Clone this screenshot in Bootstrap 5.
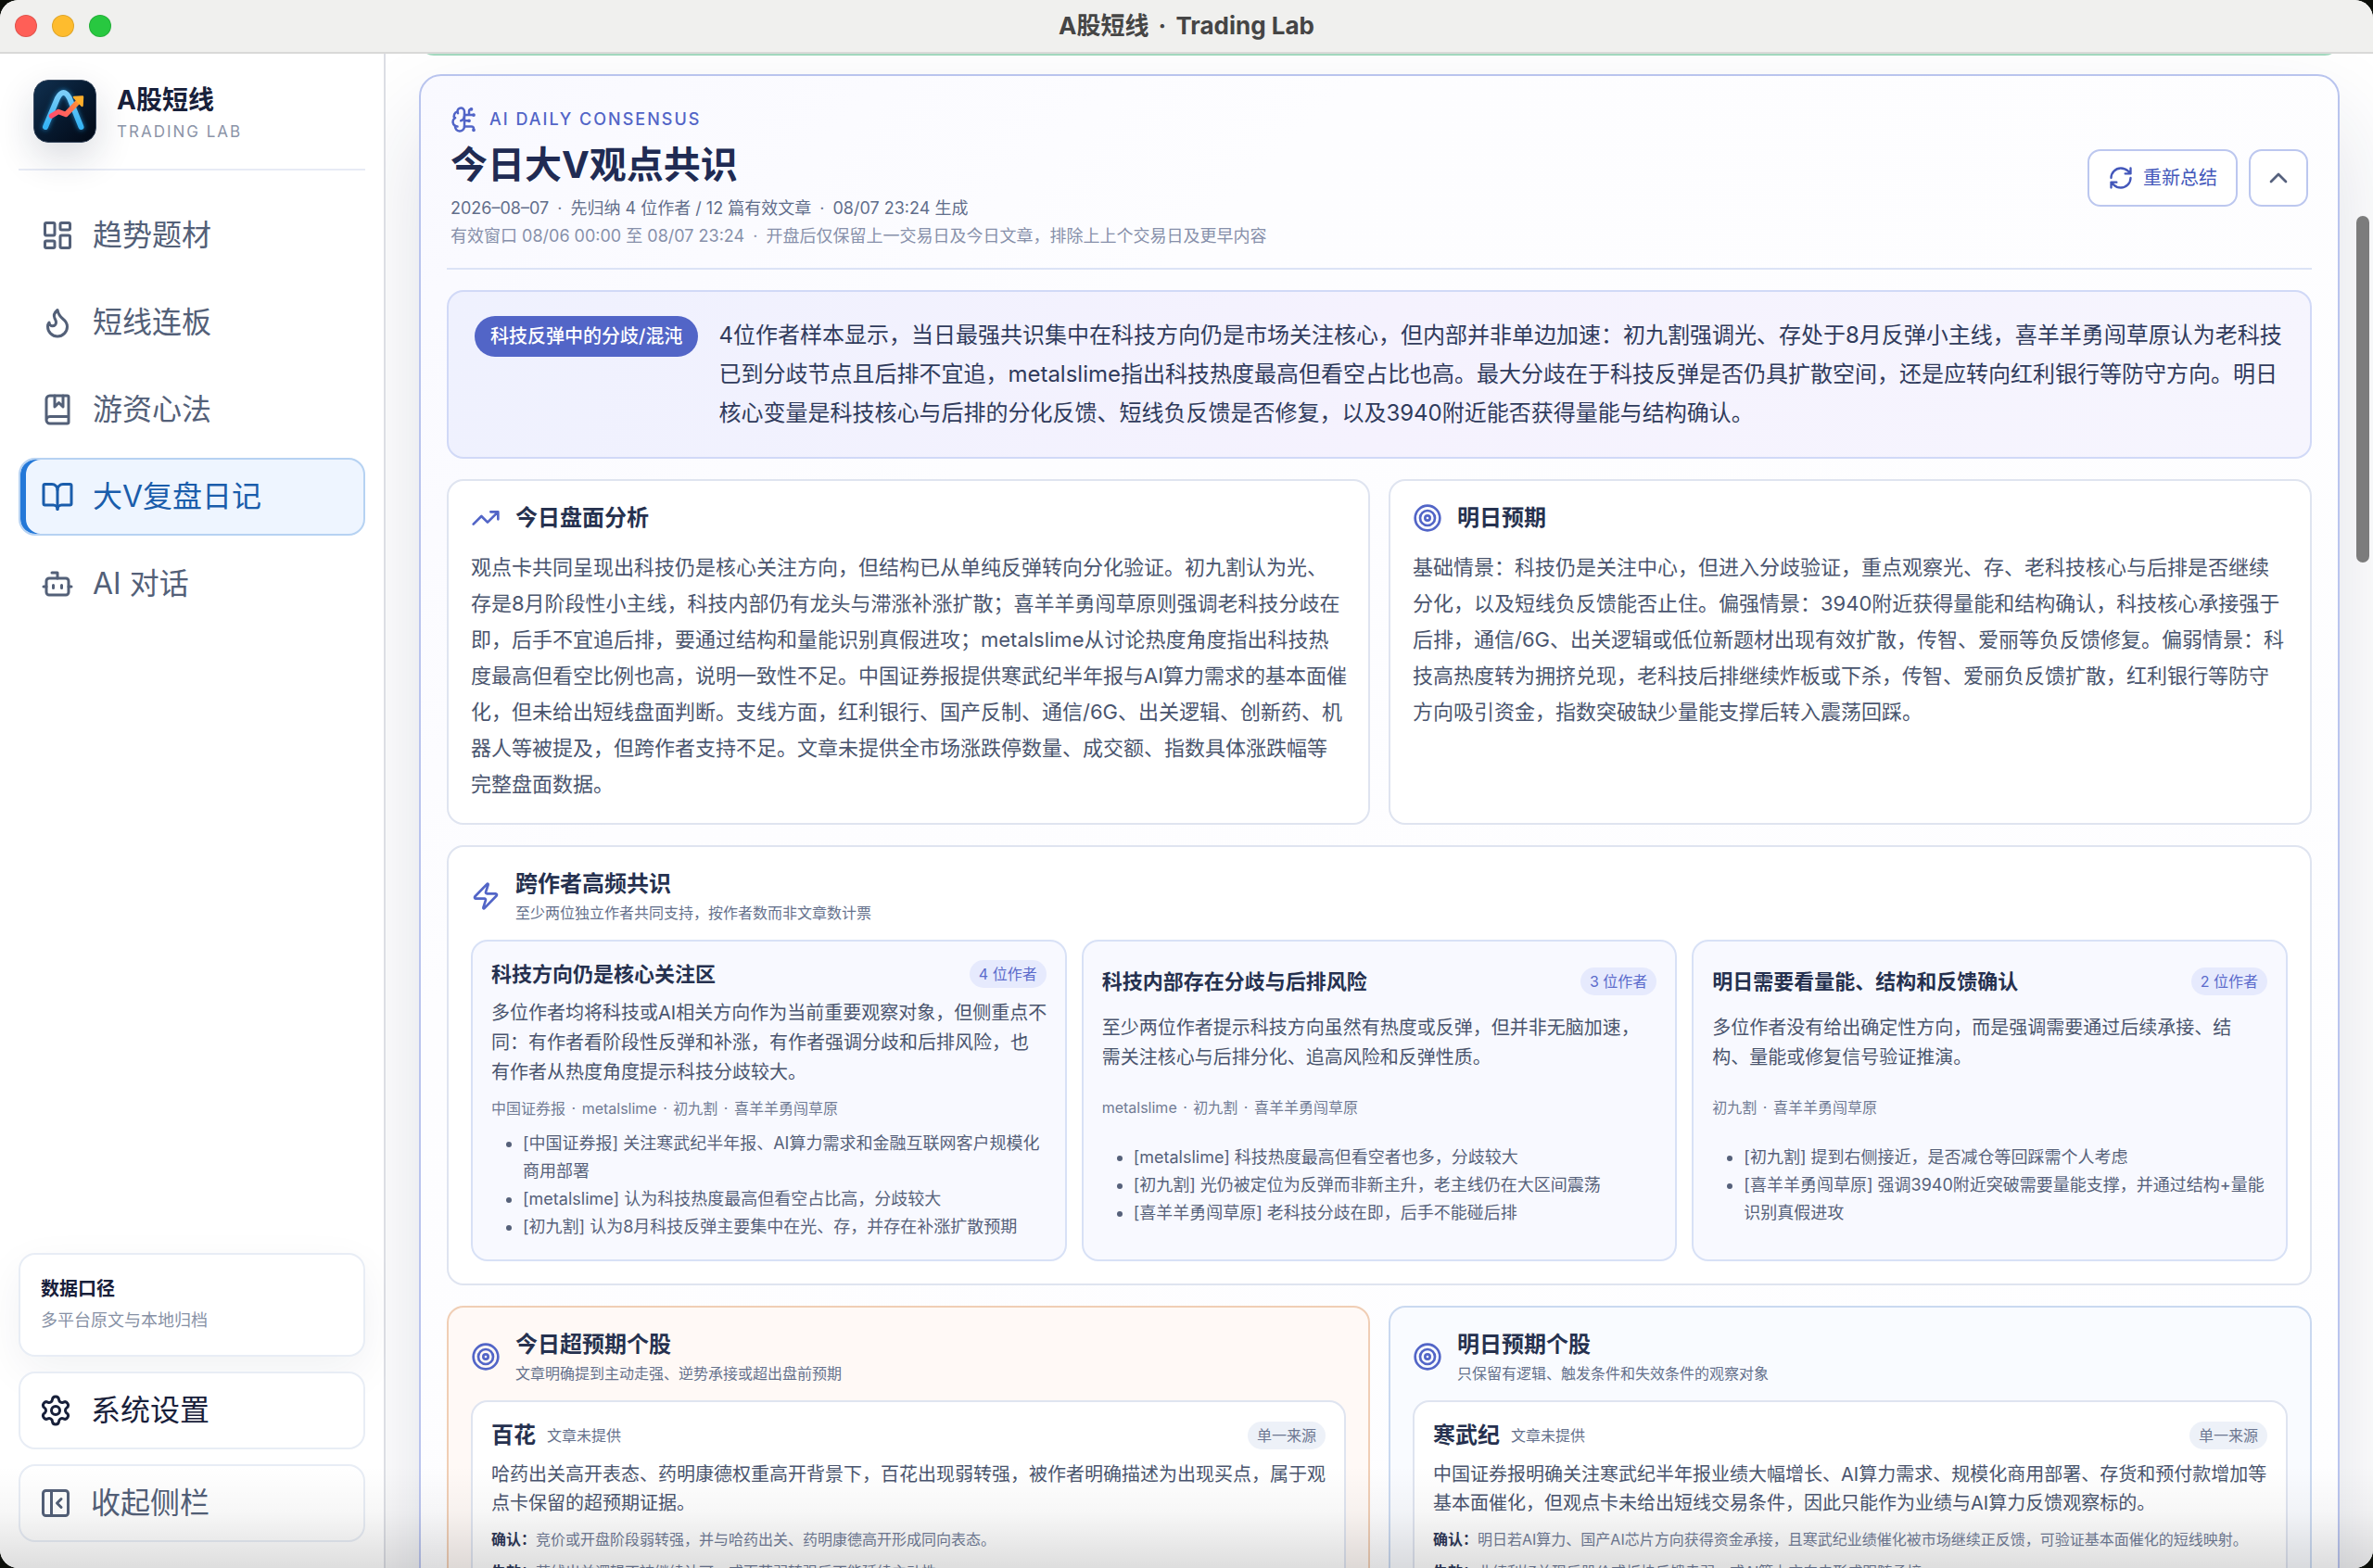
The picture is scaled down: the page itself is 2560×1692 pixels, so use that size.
<!DOCTYPE html>
<html lang="zh-CN">
<head>
<meta charset="utf-8">
<meta name="viewport" content="width=device-width, initial-scale=1">
<title>A股短线 · Trading Lab</title>
<link rel="stylesheet" href="https://cdn.jsdelivr.net/npm/bootstrap@5.3.0/dist/css/bootstrap.min.css">
<style>
  :root { --ink: #26314f; --body: #4a556e; --muted-ink: #65718c; --brand: #5265c7; --line: #dfe4f0; }
  body { font-family: Inter, "Noto Sans CJK SC", sans-serif; font-size: 20px; line-height: 32px; color: var(--body); background: #0c0f0a; }
  .app-window { height: 100vh; background: #fff; border-radius: 20px; }
  .ico { width: 32px; height: 32px; fill: none; stroke: currentColor; stroke-width: 2; stroke-linecap: round; stroke-linejoin: round; flex: none; }
  .sep { margin: 0 2px; }

  /* title bar */
  .titlebar { height: 58px; background: #f0f0ee; border-bottom: 2px solid #d9d9d8; padding: 0 16px; }
  .window-title { font-size: 26px; font-weight: 700; color: #454545; }
  .window-title .sep, .meta .sep { margin: 0 4px; }
  .light { width: 24px; height: 24px; border-radius: 50%; border: 1px solid rgba(0,0,0,.12); }
  .light-close { background: #ff5f57; } .light-min { background: #febc2e; } .light-max { background: #28c840; }
  .lights { width: 120px; gap: 16px; }

  /* sidebar */
  .sidebar { width: 416px; flex: none; border-right: 2px solid #dcdee4; padding: 28px 20px; background: #fff; }
  .brand-block { padding: 0 16px 28px; border-bottom: 2px solid #e7ebf5; gap: 22px; }
  .logo { width: 68px; height: 68px; border-radius: 16px; box-shadow: 0 16px 40px rgba(20,30,60,.16); flex: none; }
  .brand-name { font-size: 28px; line-height: 36px; font-weight: 700; color: #18203a; }
  .brand-sub { font-size: 17px; line-height: 24px; letter-spacing: 2px; color: #8b94a8; margin-top: 4px; }
  .side-nav { gap: 10px; margin-top: 28px; }
  .side-item { height: 84px; padding: 0 22px; gap: 20px; font-size: 32px; line-height: 40px; color: #536078; border: 2px solid transparent; border-radius: 18px; text-decoration: none; background: transparent; width: 100%; }
  .side-item .ico { width: 36px; height: 36px; }
  .side-item.active { background: #eef5ff; border-color: #b6d2f2; color: #1a5dab; box-shadow: inset 6px 0 0 #2478d8; }
  .side-foot { gap: 16px; }
  .side-foot .side-item { border-color: #e8edf5; background: #fff; padding: 0 20px; }
  .side-foot .side-dark { color: #18203a; }
  .source-box { border: 2px solid #e8edf5; border-radius: 18px; padding: 22px; background: #fff; box-shadow: 0 16px 48px rgba(20,30,60,.06); line-height: 30px; }
  .source-title { font-size: 20px; font-weight: 700; color: #18203a; }
  .source-note { font-size: 18px; color: #8791a5; margin-top: 4px; }

  /* main column */
  .main-pane { padding: 0 36px; background: #fff; min-width: 0; }
  .prev-panel { flex: none; height: 20px; margin-top: -18px; border: 2px solid #a3d9bf; border-top: 0; border-radius: 0 0 16px 16px; background: #fff; }
  .consensus { margin-top: 20px; padding: 28px; border: 2px solid #b9c4ee; border-radius: 24px; background: linear-gradient(135deg, #f9f9ff 0, #fdfdff 720px, #fefeff 100%); box-shadow: 0 48px 100px rgba(30,36,80,.14); flex: none; }
  .consensus-head { padding: 4px 4px 19px; border-bottom: 2px solid #dce3f6; }
  .eyebrow { font-size: 18px; line-height: 30px; letter-spacing: 2px; font-weight: 500; color: var(--brand); gap: 12px; }
  .eyebrow .ico { width: 30px; height: 30px; }
  .page-title { font-size: 40px; line-height: 56px; font-weight: 700; color: #202b53; margin: 6px 0 4px; }
  .meta { font-size: 18px; line-height: 30px; color: #626e8b; }
  .meta-light { color: #8790aa; }
  .head-tools { gap: 12px; }
  .tool-btn { height: 62px; border: 2px solid #bcc7ef; border-radius: 14px; background: #fff; color: #4357ba; font-size: 20px; padding: 0 20px; gap: 10px; }
  .tool-btn .ico { width: 28px; height: 28px; }
  .tool-square { width: 64px; padding: 0; color: #56617d; }
  .tool-square .ico { width: 32px; height: 32px; }
  .summary { margin-top: 22px; padding: 26px 28px; gap: 22px; border: 2px solid #d1d9f7; border-radius: 18px; background: linear-gradient(100deg, #eff1fe, #f5f2fe 50%, #f6f5fe); }
  .summary-tag { background: var(--brand); color: #fff; font-size: 20px; font-weight: 500; line-height: 44px; padding: 0 17px; border-radius: 22px; white-space: nowrap; }
  .summary p { font-size: 24px; line-height: 42px; color: #303b5c; }
  .stack { display: grid; gap: 22px 20px; margin-top: 22px; grid-template-columns: 1fr 1fr; }
  .panel { border: 2px solid var(--line); border-radius: 18px; background: #fff; padding: 24px; min-width: 0; }
  .panel-note { padding-bottom: 22px; }
  .panel-wide { grid-column: 1 / -1; }
  .panel-hot { background: #fff9f6; border-color: #f0ceb5; }
  .panel-next { background: #f9fbff; border-color: #cad9f0; }
  .panel-head { gap: 16px; margin-bottom: 18px; color: var(--brand); }
  .panel-head h2 { font-size: 24px; line-height: 32px; font-weight: 700; color: var(--ink); }
  .panel-head p { font-size: 16px; line-height: 22px; color: var(--muted-ink); margin-top: 4px; }
  .panel-text { font-size: 22px; line-height: 39px; margin: 0; }
  .topic-text { margin: 0 -1px 0 0; }
  .panel-text-long { margin-right: -4px; }
  .topics { display: grid; grid-template-columns: repeat(3, 1fr); gap: 16px; }
  .topic, .stock { display: grid; gap: 11px; padding: 20px; border: 2px solid #d8e1f6; border-radius: 18px; background: #f8f9ff; }
  .stock { border-color: #dfe4f0; background: #fff; }
  .topic h3 { font-size: 22px; line-height: 30px; font-weight: 700; color: var(--ink); }
  .stock h3 { font-size: 24px; line-height: 30px; font-weight: 700; color: var(--ink); }
  .stock-code { font-size: 16px; color: var(--muted-ink); }
  .count-pill { font-size: 16px; line-height: 30px; padding: 0 10px; border-radius: 15px; background: #e6eafd; color: #5b6bcb; white-space: nowrap; }
  .count-gray { background: #edf1f8; color: #6c7791; }
  .authors { font-size: 16px; line-height: 24px; color: #717c95; }
  .evidence { font-size: 18px; line-height: 30px; padding-left: 34px; color: #56617a; }
  .stock-text { line-height: 31px; }
  .cond { font-size: 16px; line-height: 24px; color: #727d98; }
  .cond strong { color: #2d3857; font-weight: 700; }
  .scroll-thumb { position: absolute; right: 4px; top: 175px; width: 14px; height: 374px; border-radius: 7px; background: #7c7c7c; }
  .bottom-shade { position: absolute; left: 0; right: 0; bottom: 0; height: 110px; pointer-events: none; background: linear-gradient(to bottom, rgba(0,0,0,0), rgba(0,0,0,.03) 45%, rgba(0,0,0,.13)); }
</style>
</head>
<body>
<svg class="d-none" aria-hidden="true">
  <symbol id="i-target" viewBox="0 0 24 24"><circle cx="12" cy="12" r="10"/><circle cx="12" cy="12" r="6"/><circle cx="12" cy="12" r="2"/></symbol>
</svg>
<div class="app-window d-flex flex-column overflow-hidden position-relative">
  <header class="titlebar d-flex align-items-center flex-shrink-0">
    <div class="lights d-flex"><span class="light light-close"></span><span class="light light-min"></span><span class="light light-max"></span></div>
    <div class="window-title flex-grow-1 text-center">A股短线 <span class="sep">·</span> Trading Lab</div>
    <div class="lights"></div>
  </header>
  <div class="d-flex flex-grow-1 overflow-hidden position-relative">
    <aside class="sidebar d-flex flex-column">
      <div class="brand-block d-flex align-items-center">
        <svg class="logo" viewBox="0 0 68 68" aria-hidden="true">
          <defs>
            <linearGradient id="lg-bg" x1="0" y1="0" x2="1" y2="1"><stop offset="0" stop-color="#10304f"/><stop offset=".5" stop-color="#071a30"/><stop offset="1" stop-color="#020814"/></linearGradient>
            <linearGradient id="lg-a" x1="0" y1="0" x2="0" y2="1"><stop offset="0" stop-color="#7ccdf8"/><stop offset="1" stop-color="#35b4f5"/></linearGradient>
            <linearGradient id="lg-r" gradientUnits="userSpaceOnUse" x1="18" y1="38" x2="54" y2="18"><stop offset="0" stop-color="#ff4d6d"/><stop offset=".5" stop-color="#ff6a55"/><stop offset="1" stop-color="#ffb01f"/></linearGradient>
            <filter id="lg-glow" x="-30%" y="-30%" width="160%" height="160%"><feGaussianBlur stdDeviation="2.5"/></filter>
          </defs>
          <rect x="0.5" y="0.5" width="67" height="67" rx="15.5" fill="url(#lg-bg)" stroke="#3a4a60"/>
          <path d="M13 51 26 20Q32.500 8 39 20L51.500 51" fill="none" stroke="#2aa4f0" stroke-opacity=".6" stroke-width="7" stroke-linecap="round" stroke-linejoin="round" filter="url(#lg-glow)"/>
          <path d="M13 51 26 20Q32.500 8 39 20L51.500 51" fill="none" stroke="url(#lg-a)" stroke-width="6" stroke-linecap="round" stroke-linejoin="round"/>
          <path d="M19.500 39 27 34.500 35 37.500 49 23" fill="none" stroke="url(#lg-r)" stroke-width="5.500" stroke-linecap="round" stroke-linejoin="round"/>
          <path d="M44 19 53 18.500 52.500 28Z" fill="#ffae2b" stroke="#ffae2b" stroke-width="2.500" stroke-linejoin="round"/>
        </svg>
        <div class="pt-1">
          <div class="brand-name">A股短线</div>
          <div class="brand-sub">TRADING LAB</div>
        </div>
      </div>
      <nav class="side-nav d-flex flex-column">
        <a class="side-item d-flex align-items-center" href="#"><svg class="ico" viewBox="0 0 24 24"><rect x="3" y="3" width="7" height="9" rx="1"/><rect x="14" y="3" width="7" height="5" rx="1"/><rect x="14" y="12" width="7" height="9" rx="1"/><rect x="3" y="16" width="7" height="5" rx="1"/></svg>趋势题材</a>
        <a class="side-item d-flex align-items-center" href="#"><svg class="ico" viewBox="0 0 24 24"><path d="M8.500 14.500A2.500 2.500 0 0 0 11 12c0-1.380-.5-2-1-3-1.072-2.143-.224-4.054 2-6 .5 2.500 2 4.900 4 6.500 2 1.600 3 3.500 3 5.500a7 7 0 1 1-14 0c0-1.153.433-2.294 1-3a2.500 2.500 0 0 0 2.500 2.500z"/></svg>短线连板</a>
        <a class="side-item d-flex align-items-center" href="#"><svg class="ico" viewBox="0 0 24 24"><path d="M10 2v8l3-3 3 3V2"/><path d="M4 19.500v-15A2.500 2.500 0 0 1 6.500 2H19a1 1 0 0 1 1 1v18a1 1 0 0 1-1 1H6.500a1 1 0 0 1 0-5H20"/></svg>游资心法</a>
        <a class="side-item active d-flex align-items-center" href="#" aria-current="page"><svg class="ico" viewBox="0 0 24 24"><path d="M12 7v14"/><path d="M3 18a1 1 0 0 1-1-1V4a1 1 0 0 1 1-1h5a4 4 0 0 1 4 4 4 4 0 0 1 4-4h5a1 1 0 0 1 1 1v13a1 1 0 0 1-1 1h-6a3 3 0 0 0-3 3 3 3 0 0 0-3-3z"/></svg>大V复盘日记</a>
        <a class="side-item d-flex align-items-center" href="#"><svg class="ico" viewBox="0 0 24 24"><path d="M12 8V4H8"/><rect x="4" y="8" width="16" height="12" rx="2"/><path d="M2 14h2M20 14h2M15 13v2M9 13v2"/></svg>AI 对话</a>
      </nav>
      <div class="side-foot d-flex flex-column mt-auto">
        <div class="source-box">
          <div class="source-title">数据口径</div>
          <div class="source-note">多平台原文与本地归档</div>
        </div>
        <button type="button" class="side-item side-dark d-flex align-items-center"><svg class="ico" viewBox="0 0 24 24"><path d="M9.671 4.136a2.340 2.340 0 0 1 4.659 0 2.340 2.340 0 0 0 3.319 1.915 2.340 2.340 0 0 1 2.330 4.033 2.340 2.340 0 0 0 0 3.831 2.340 2.340 0 0 1-2.330 4.033 2.340 2.340 0 0 0-3.319 1.915 2.340 2.340 0 0 1-4.659 0 2.340 2.340 0 0 0-3.320-1.915 2.340 2.340 0 0 1-2.330-4.033 2.340 2.340 0 0 0 0-3.831A2.340 2.340 0 0 1 6.350 6.051a2.340 2.340 0 0 0 3.319-1.915"/><circle cx="12" cy="12" r="3"/></svg>系统设置</button>
        <button type="button" class="side-item d-flex align-items-center"><svg class="ico" viewBox="0 0 24 24"><rect x="3" y="3" width="18" height="18" rx="2"/><path d="M9 3v18M16 15l-3-3 3-3"/></svg>收起侧栏</button>
      </div>
    </aside>

    <main class="main-pane d-flex flex-column flex-grow-1 overflow-hidden">
      <div class="prev-panel"></div>
      <section class="consensus">
        <div class="consensus-head d-flex align-items-center justify-content-between">
          <div>
            <div class="eyebrow d-flex align-items-center"><svg class="ico" viewBox="0 0 24 24"><path d="M12 5a3 3 0 1 0-5.997.125 4 4 0 0 0-2.526 5.770 4 4 0 0 0 .556 6.588A4 4 0 1 0 12 18Z"/><path d="M9 13a4.500 4.500 0 0 0 3-4M6.003 5.125A3 3 0 0 0 6.401 6.500M3.477 10.896a4 4 0 0 1 .585-.396M6 18a4 4 0 0 1-1.967-.516M12 13h4M12 18h6a2 2 0 0 1 2 2v1M12 8h8M16 8V5a2 2 0 0 1 2-2"/><circle cx="16" cy="13" r=".5"/><circle cx="18" cy="3" r=".5"/><circle cx="20" cy="21" r=".5"/><circle cx="20" cy="8" r=".5"/></svg>AI DAILY CONSENSUS</div>
            <h1 class="page-title">今日大V观点共识</h1>
            <div class="meta">2026–08–07 <span class="sep">·</span> 先归纳 4 位作者 / 12 篇有效文章 <span class="sep">·</span> 08/07 23:24 生成</div>
            <div class="meta meta-light">有效窗口 08/06 00:00 至 08/07 23:24 <span class="sep">·</span> 开盘后仅保留上一交易日及今日文章，排除上上个交易日及更早内容</div>
          </div>
          <div class="head-tools d-flex">
            <button type="button" class="tool-btn d-flex align-items-center"><svg class="ico" viewBox="0 0 24 24"><path d="M3 12a9 9 0 0 1 9-9 9.750 9.750 0 0 1 6.740 2.740L21 8M21 3v5h-5M21 12a9 9 0 0 1-9 9 9.750 9.750 0 0 1-6.740-2.740L3 16M8 16H3v5"/></svg>重新总结</button>
            <button type="button" class="tool-btn tool-square d-flex align-items-center justify-content-center" aria-label="收起"><svg class="ico" viewBox="0 0 24 24"><path d="m18 15-6-6-6 6"/></svg></button>
          </div>
        </div>

        <div class="summary d-flex align-items-start">
          <span class="summary-tag">科技反弹中的分歧/混沌</span>
          <p class="mb-0">4位作者样本显示，当日最强共识集中在科技方向仍是市场关注核心，但内部并非单边加速：初九割强调光、存处于8月反弹小主线，喜羊羊勇闯草原认为老科技已到分歧节点且后排不宜追，metalslime指出科技热度最高但看空占比也高。最大分歧在于科技反弹是否仍具扩散空间，还是应转向红利银行等防守方向。明日核心变量是科技核心与后排的分化反馈、短线负反馈是否修复，以及3940附近能否获得量能与结构确认。</p>
        </div>

        <div class="stack">
          <article class="panel panel-note">
            <div class="panel-head d-flex align-items-center"><svg class="ico" viewBox="0 0 24 24"><path d="M16 7h6v6M22 7l-8.500 8.500-5-5L2 17"/></svg><h2 class="mb-0">今日盘面分析</h2></div>
            <p class="panel-text panel-text-long">观点卡共同呈现出科技仍是核心关注方向，但结构已从单纯反弹转向分化验证。初九割认为光、<br>存是8月阶段性小主线，科技内部仍有龙头与滞涨补涨扩散；喜羊羊勇闯草原则强调老科技分歧在<br>即，后手不宜追后排，要通过结构和量能识别真假进攻；metalslime从讨论热度角度指出科技热<br>度最高但看空比例也高，说明一致性不足。中国证券报提供寒武纪半年报与AI算力需求的基本面催化，但未给出短线盘面判断。支线方面，红利银行、国产反制、通信/6G、出关逻辑、创新药、机器人等被提及，但跨作者支持不足。文章未提供全市场涨跌停数量、成交额、指数具体涨跌幅等<br>完整盘面数据。</p>
          </article>
          <article class="panel panel-note">
            <div class="panel-head d-flex align-items-center"><svg class="ico"><use href="#i-target"/></svg><h2 class="mb-0">明日预期</h2></div>
            <p class="panel-text">基础情景：科技仍是关注中心，但进入分歧验证，重点观察光、存、老科技核心与后排是否继续分化，以及短线负反馈能否止住。偏强情景：3940附近获得量能和结构确认，科技核心承接强于后排，通信/6G、出关逻辑或低位新题材出现有效扩散，传智、爱丽等负反馈修复。偏弱情景：科技高热度转为拥挤兑现，老科技后排继续炸板或下杀，传智、爱丽负反馈扩散，红利银行等防守方向吸引资金，指数突破缺少量能支撑后转入震荡回踩。</p>
          </article>

          <article class="panel panel-wide">
            <div class="panel-head d-flex align-items-center"><svg class="ico" viewBox="0 0 24 24"><path d="M4 14a1 1 0 0 1-.78-1.630l9.900-10.200a.5.5 0 0 1 .86.46l-1.920 6.020A1 1 0 0 0 13 10h7a1 1 0 0 1 .78 1.630l-9.900 10.200a.5.5 0 0 1-.86-.46l1.920-6.020A1 1 0 0 0 11 14z"/></svg><div><h2 class="mb-0">跨作者高频共识</h2><p class="mb-0">至少两位独立作者共同支持，按作者数而非文章数计票</p></div></div>
            <div class="topics">
              <div class="topic">
                <div class="d-flex align-items-center justify-content-between"><h3 class="mb-0">科技方向仍是核心关注区</h3><span class="count-pill">4 位作者</span></div>
                <p class="topic-text">多位作者均将科技或AI相关方向作为当前重要观察对象，但侧重点不同：有作者看阶段性反弹和补涨，有作者强调分歧和后排风险，也有作者从热度角度提示科技分歧较大。</p>
                <div class="authors">中国证券报 <span class="sep">·</span> metalslime <span class="sep">·</span> 初九割 <span class="sep">·</span> 喜羊羊勇闯草原</div>
                <ul class="evidence mb-0">
                  <li>[中国证券报] 关注寒武纪半年报、AI算力需求和金融互联网客户规模化商用部署</li>
                  <li>[metalslime] 认为科技热度最高但看空占比高，分歧较大</li>
                  <li>[初九割] 认为8月科技反弹主要集中在光、存，并存在补涨扩散预期</li>
                </ul>
              </div>
              <div class="topic">
                <div class="d-flex align-items-center justify-content-between"><h3 class="mb-0">科技内部存在分歧与后排风险</h3><span class="count-pill">3 位作者</span></div>
                <p class="topic-text">至少两位作者提示科技方向虽然有热度或反弹，但并非无脑加速，需关注核心与后排分化、追高风险和反弹性质。</p>
                <div class="authors">metalslime <span class="sep">·</span> 初九割 <span class="sep">·</span> 喜羊羊勇闯草原</div>
                <ul class="evidence mb-0">
                  <li>[metalslime] 科技热度最高但看空者也多，分歧较大</li>
                  <li>[初九割] 光仍被定位为反弹而非新主升，老主线仍在大区间震荡</li>
                  <li>[喜羊羊勇闯草原] 老科技分歧在即，后手不能碰后排</li>
                </ul>
              </div>
              <div class="topic">
                <div class="d-flex align-items-center justify-content-between"><h3 class="mb-0">明日需要看量能、结构和反馈确认</h3><span class="count-pill">2 位作者</span></div>
                <p class="topic-text">多位作者没有给出确定性方向，而是强调需要通过后续承接、结构、量能或修复信号验证推演。</p>
                <div class="authors">初九割 <span class="sep">·</span> 喜羊羊勇闯草原</div>
                <ul class="evidence mb-0">
                  <li>[初九割] 提到右侧接近，是否减仓等回踩需个人考虑</li>
                  <li>[喜羊羊勇闯草原] 强调3940附近突破需要量能支撑，并通过结构+量能识别真假进攻</li>
                </ul>
              </div>
            </div>
          </article>

          <article class="panel panel-hot">
            <div class="panel-head d-flex align-items-center"><svg class="ico"><use href="#i-target"/></svg><div><h2 class="mb-0">今日超预期个股</h2><p class="mb-0">文章明确提到主动走强、逆势承接或超出盘前预期</p></div></div>
            <div class="stock">
              <div class="d-flex align-items-center"><h3 class="mb-0">百花</h3><span class="stock-code ms-2 ps-1 me-auto">文章未提供</span><span class="count-pill count-gray">单一来源</span></div>
              <p class="stock-text mb-0">哈药出关高开表态、药明康德权重高开背景下，百花出现弱转强，被作者明确描述为出现买点，属于观点卡保留的超预期证据。</p>
              <div class="cond"><strong>确认：</strong>竞价或开盘阶段弱转强，并与哈药出关、药明康德高开形成同向表态。</div>
              <div class="cond"><strong>失效：</strong>药线出关逻辑不被继续认可，或百花弱转强后不能延续主动性。</div>
            </div>
          </article>
          <article class="panel panel-next">
            <div class="panel-head d-flex align-items-center"><svg class="ico"><use href="#i-target"/></svg><div><h2 class="mb-0">明日预期个股</h2><p class="mb-0">只保留有逻辑、触发条件和失效条件的观察对象</p></div></div>
            <div class="stock">
              <div class="d-flex align-items-center"><h3 class="mb-0">寒武纪</h3><span class="stock-code ms-2 ps-1 me-auto">文章未提供</span><span class="count-pill count-gray">单一来源</span></div>
              <p class="stock-text mb-0">中国证券报明确关注寒武纪半年报业绩大幅增长、AI算力需求、规模化商用部署、存货和预付款增加等基本面催化，但观点卡未给出短线交易条件，因此只能作为业绩与AI算力反馈观察标的。</p>
              <div class="cond"><strong>确认：</strong>明日若AI算力、国产AI芯片方向获得资金承接，且寒武纪业绩催化被市场继续正反馈，可验证基本面催化的短线映射。</div>
              <div class="cond"><strong>失效：</strong>业绩利好兑现后股价或板块反馈走弱，或AI算力方向未形成跟随承接。</div>
            </div>
          </article>
        </div>
      </section>
    </main>
    <div class="scroll-thumb"></div>
  </div>
  <div class="bottom-shade"></div>
</div>
<script src="https://cdn.jsdelivr.net/npm/bootstrap@5.3.0/dist/js/bootstrap.bundle.min.js"></script>
</body>
</html>
